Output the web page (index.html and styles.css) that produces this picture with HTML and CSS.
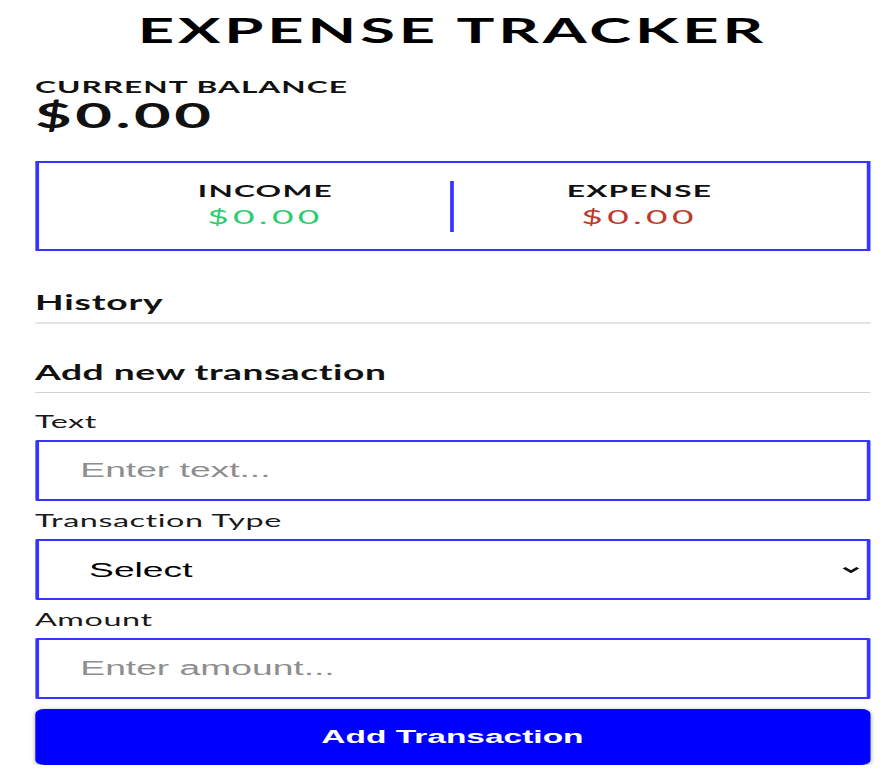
FILE: index.html
```html
<!DOCTYPE html>
<html lang="en">
<head>
<meta charset="UTF-8">
<title>Expense Tracker</title>
<link rel="stylesheet" href="styles.css">
</head>
<body>
<div class="page">
  <div class="container">
    <h2 class="title">EXPENSE TRACKER</h2>
    <h4 class="balance-label">Current Balance</h4>
    <h1 class="balance">$0.00</h1>
    <div class="inc-exp">
      <div class="col">
        <h4 class="col-title">Income</h4>
        <p class="money plus">$0.00</p>
      </div>
      <div class="divider"></div>
      <div class="col">
        <h4 class="col-title">Expense</h4>
        <p class="money minus">$0.00</p>
      </div>
    </div>
    <h3 class="section section-history">History</h3>
    <h3 class="section section-add">Add new transaction</h3>
    <form class="form">
      <label class="label" for="text">Text</label>
      <input class="field" type="text" id="text" placeholder="Enter text...">
      <label class="label" for="type">Transaction Type</label>
      <div class="select-wrap">
        <select class="field select" id="type">
          <option>Select</option>
          <option>Income</option>
          <option>Expense</option>
        </select>
        <svg class="chevron" width="9" height="6" viewBox="0 0 9 6"><polyline points="0.8,0.8 4.5,4.8 8.2,0.8" fill="none" stroke="#111" stroke-width="2"/></svg>
      </div>
      <label class="label" for="amount">Amount</label>
      <input class="field" type="number" id="amount" placeholder="Enter amount...">
      <button class="btn" type="button">Add Transaction</button>
    </form>
  </div>
</div>
</body>
</html>
```
FILE: styles.css
```css
* { box-sizing: border-box; }
html, body { margin: 0; padding: 0; background: #fff; }
body {
  font-family: Lato, "Noto Sans", sans-serif;
  color: #111;
  overflow: hidden;
}
.page {
  width: 479.6px;
  transform: scaleX(1.86);
  transform-origin: 0 0;
}
.container {
  width: 448.9px;
  margin-left: 18.8px;
}
.title {
  margin: 9px 0 0;
  font-size: 34px;
  line-height: 41px;
  font-weight: 700;
  text-align: center;
  letter-spacing: 2.1px;
  color: #000;
}
.balance-label {
  margin: 27px 0 0;
  font-size: 17px;
  line-height: 20px;
  font-weight: 700;
  text-transform: uppercase;
  letter-spacing: 0.55px;
}
.balance {
  margin: 0;
  font-size: 34px;
  line-height: 36px;
  font-weight: 700;
  letter-spacing: 1.9px;
}
.inc-exp {
  margin-top: 28px;
  border: 2px solid #3535ff;
  padding: 18px 22.3px 17px;
  display: flex;
  align-items: flex-start;
}
.col {
  flex: 1;
  text-align: center;
}
.col-title {
  margin: 0;
  font-size: 17px;
  line-height: 20px;
  font-weight: 700;
  text-transform: uppercase;
  letter-spacing: 0.65px;
}
.money {
  margin: 3px 0 0;
  font-size: 20px;
  line-height: 24px;
  letter-spacing: 2.3px;
}
.plus { color: #2ecc71; }
.minus { color: #c0392b; }
.divider {
  width: 2px;
  height: 51px;
  background: #3535ff;
}
.section {
  margin: 0;
  font-size: 20px;
  line-height: 24px;
  font-weight: 700;
  padding-bottom: 8px;
}
.section-history {
  margin-top: 39px;
  border-bottom: 2px solid #e4e4e4;
  letter-spacing: 0.45px;
}
.section-add {
  margin-top: 36px;
  border-bottom: 1px solid #d2d2d2;
  margin-bottom: 9px;
  letter-spacing: 0.28px;
}
.form {
  display: flex;
  flex-direction: column;
}
.label {
  display: block;
  margin: 10px 0 9px;
  font-size: 17.4px;
  line-height: 19px;
  color: #1a1a1a;
  letter-spacing: 0.3px;
}
.field {
  display: block;
  width: 100%;
  height: 61px;
  border: 2px solid #3535ff;
  border-radius: 1px;
  padding: 0 10px 0 22.4px;
  font-family: "Liberation Sans", Arial, sans-serif;
  font-size: 20px;
  color: #111;
  background: #fff;
  outline: none;
}
.field::placeholder { color: #8e8e8e; }
.select-wrap { position: relative; }
.select {
  appearance: none;
  -webkit-appearance: none;
  padding-left: 27.1px;
  color: #000;
}
.chevron {
  position: absolute;
  right: 5.6px;
  top: 50%;
  margin-top: -2.5px;
  pointer-events: none;
}
.btn {
  margin: 10px 0 0;
  height: 56px;
  width: 100%;
  border: 0;
  border-radius: 5px;
  background: #0000ff;
  color: #fff;
  font-family: "Liberation Sans", Arial, sans-serif;
  font-size: 18px;
  font-weight: 700;
  box-shadow: 0 1px 3px rgba(0, 0, 0, 0.35);
}
```
